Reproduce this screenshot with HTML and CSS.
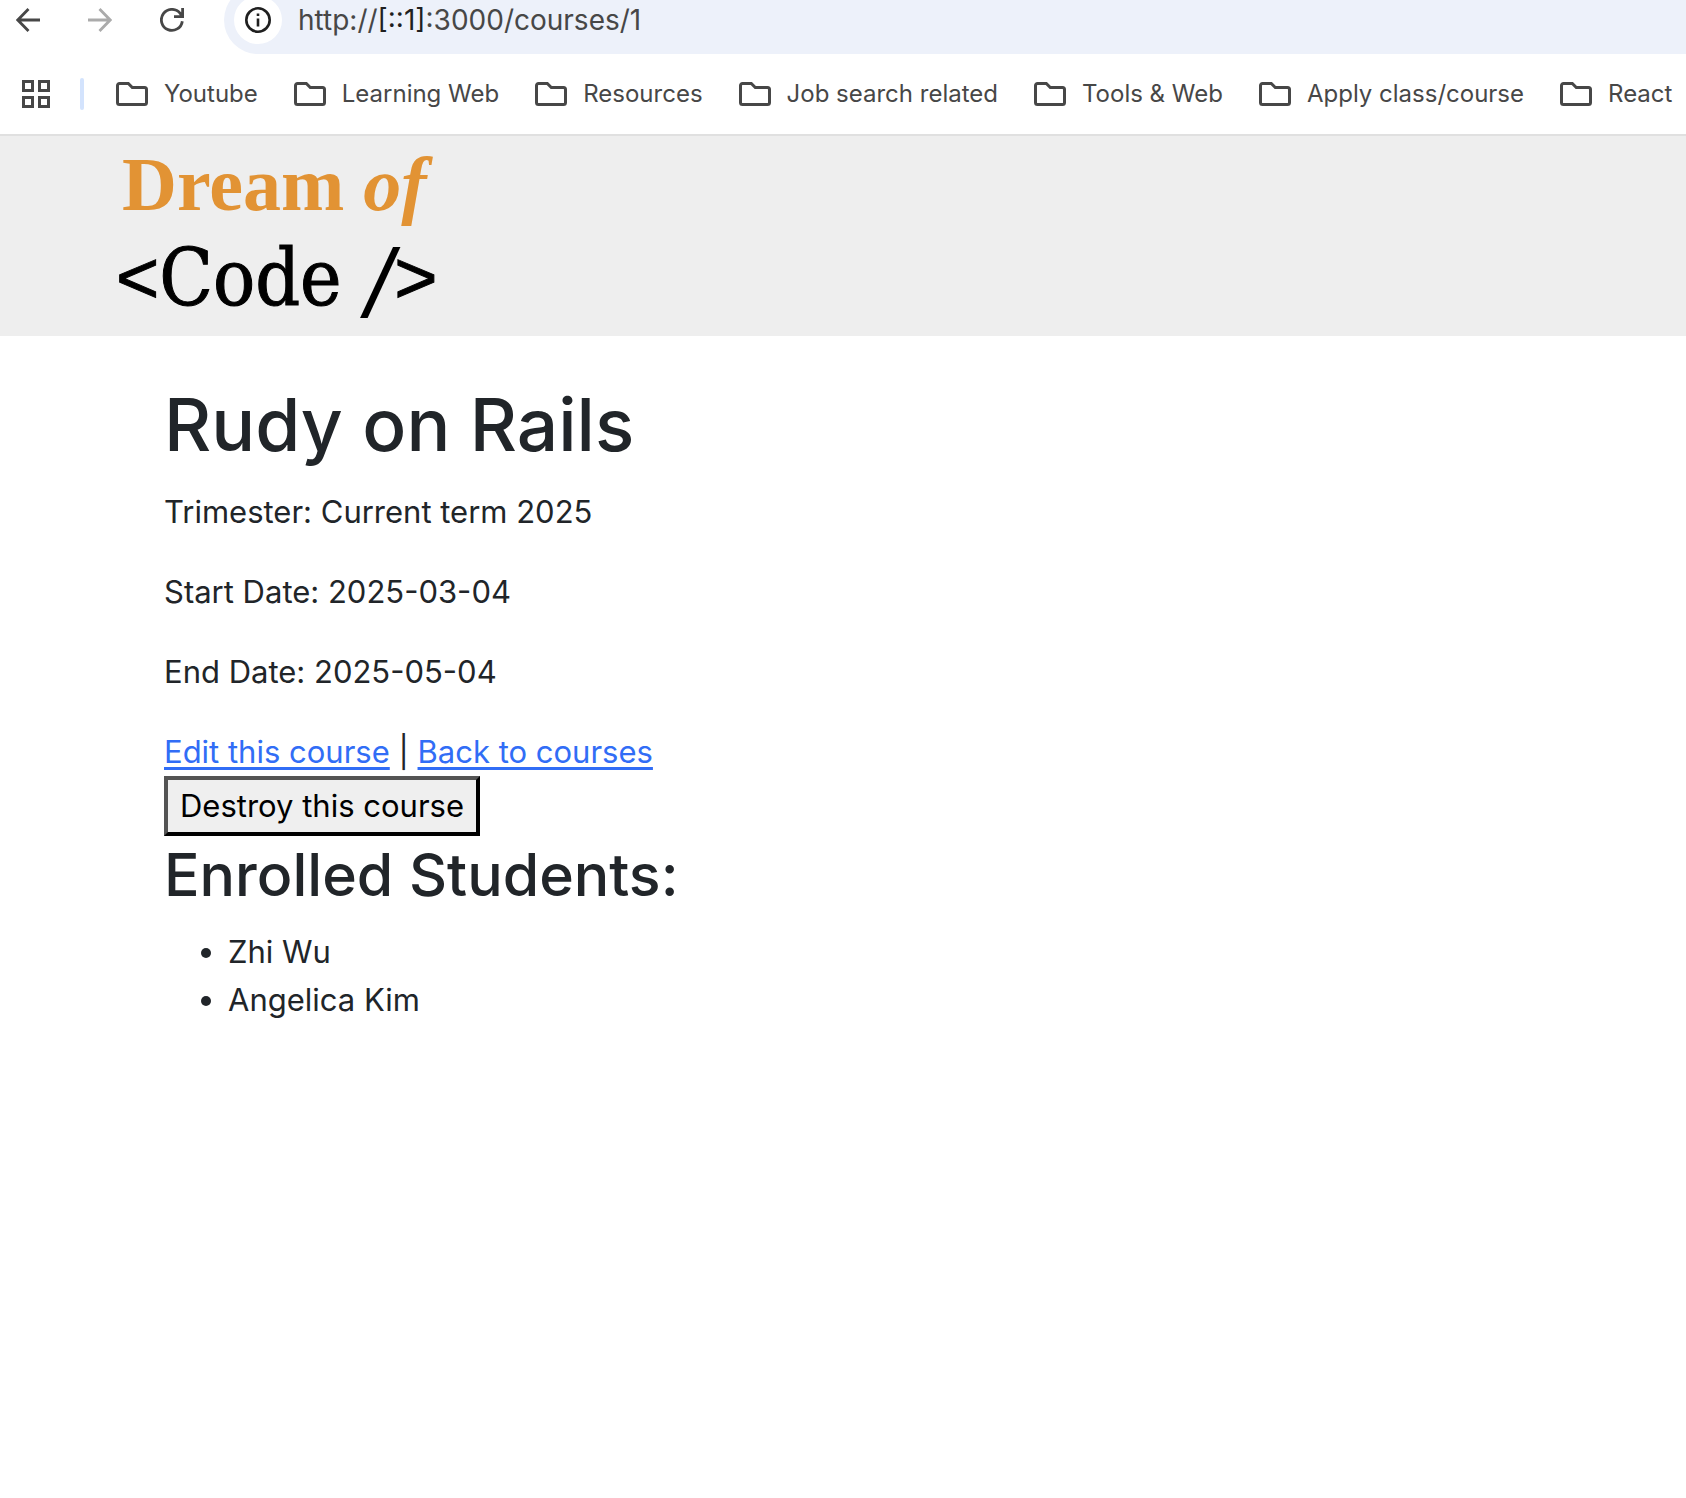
FILE: index.html
```html
<!DOCTYPE html>
<html lang="en">
<head>
<meta charset="utf-8">
<meta name="viewport" content="width=device-width, initial-scale=1">
<title>Dream of Code</title>
<link rel="stylesheet" href="styles.css">
</head>
<body>
<svg class="sprite" aria-hidden="true">
  <symbol id="folder" viewBox="0 0 32 24"><path d="M3.500 1.500h8.800l4 4H28.500a2 2 0 0 1 2 2v13a2 2 0 0 1-2 2h-25a2 2 0 0 1-2-2v-17a2 2 0 0 1 2-2z" fill="none" stroke="currentColor" stroke-width="3"/></symbol>
</svg>

<div class="toolbar">
  <div class="nav">
    <button type="button" class="icon-button" aria-label="Back">
      <svg width="24" height="24" viewBox="0 0 24 24" fill="none" stroke="currentColor" stroke-width="2.800"><path d="M12.500 1 1.800 12l10.700 11M2 12h22"/></svg>
    </button>
    <button type="button" class="icon-button" aria-label="Forward" disabled>
      <svg width="24" height="24" viewBox="0 0 24 24" fill="none" stroke="currentColor" stroke-width="2.800"><path d="M11.500 1l10.700 11-10.700 11M22 12H0"/></svg>
    </button>
    <button type="button" class="icon-button" aria-label="Reload">
      <svg width="24" height="24" viewBox="0 0 24 24" fill="none" stroke="currentColor" stroke-width="2.800"><path d="M22.300 13.200A10.500 10.500 0 1 1 20 5.200l2 2.800M22.600 0v8.600H14"/></svg>
    </button>
  </div>
  <div class="address">
    <button type="button" class="site-info" aria-label="View site information">
      <svg width="26" height="26" viewBox="0 0 26 26" fill="none" stroke="currentColor" stroke-width="2.600"><circle cx="13" cy="13" r="11.700"/><path d="M13 11.500v8M13 6.500v2.600"/></svg>
    </button>
    <div class="url" role="textbox" aria-label="Address">http://<span class="host">[::1]</span>:3000/courses/1</div>
  </div>
</div>

<nav class="bookmarks" aria-label="Bookmarks">
  <button type="button" class="icon-button" aria-label="Apps">
    <svg width="28" height="28" viewBox="0 0 28 28" fill="none" stroke="currentColor" stroke-width="3"><path d="M1.500 1.500h9v9h-9zM17.500 1.500h9v9h-9zM1.500 17.500h9v9h-9zM17.500 17.500h9v9h-9z"/></svg>
  </button>
  <span class="divider"></span>
  <div class="folders">
    <button type="button" class="folder"><svg width="32" height="24"><use href="#folder"/></svg>Youtube</button>
    <button type="button" class="folder"><svg width="32" height="24"><use href="#folder"/></svg>Learning Web</button>
    <button type="button" class="folder"><svg width="32" height="24"><use href="#folder"/></svg>Resources</button>
    <button type="button" class="folder"><svg width="32" height="24"><use href="#folder"/></svg>Job search related</button>
    <button type="button" class="folder"><svg width="32" height="24"><use href="#folder"/></svg>Tools &amp; Web</button>
    <button type="button" class="folder"><svg width="32" height="24"><use href="#folder"/></svg>Apply class/course</button>
    <button type="button" class="folder"><svg width="32" height="24"><use href="#folder"/></svg>React</button>
  </div>
</nav>

<header class="site-header">
  <div class="logo">
    <div class="logo-top">Dream <em>of</em></div>
    <div class="logo-code"><span class="bracket">&lt;</span><span>Code</span><span class="slash">/</span><span class="bracket">&gt;</span></div>
  </div>
</header>

<main class="content">
  <h1>Rudy on Rails</h1>
  <p>Trimester: Current term 2025</p>
  <p>Start Date: 2025-03-04</p>
  <p>End Date: 2025-05-04</p>
  <div class="actions"><a href="#edit">Edit this course</a> | <a href="#courses">Back to courses</a></div>
  <form><button type="button" class="destroy">Destroy this course</button></form>
  <h2>Enrolled Students:</h2>
  <ul>
    <li>Zhi Wu</li>
    <li>Angelica Kim</li>
  </ul>
</main>
</body>
</html>
```
FILE: styles.css
```css
* {
  box-sizing: border-box;
}

body {
  margin: 0;
  background: #fff;
  color: #212529;
  font-family: Inter, "Liberation Sans", sans-serif;
  font-size: 31px;
  line-height: 48px;
  overflow-x: hidden;
}

button {
  font: inherit;
}

.sprite {
  display: none;
}

/* Browser toolbar */
.toolbar {
  display: flex;
  align-items: flex-end;
  height: 54px;
  overflow: hidden;
  color: #474747;
}

.nav {
  display: flex;
  align-items: center;
  gap: 48px;
  height: 68px;
  padding: 0 40px 0 16px;
}

.icon-button {
  display: flex;
  padding: 0;
  border: 0;
  background: none;
  color: #474747;
}

.icon-button:disabled {
  color: #ababab;
}

.address {
  display: flex;
  flex: 1;
  align-items: center;
  gap: 16px;
  height: 68px;
  padding-left: 10px;
  border-radius: 34px 0 0 34px;
  background: #edf1fa;
}

.site-info {
  display: flex;
  align-items: center;
  justify-content: center;
  width: 48px;
  height: 48px;
  padding: 0;
  border: 0;
  border-radius: 50%;
  background: #fff;
  color: #1f1f1f;
}

.url {
  font-size: 28px;
  line-height: 32px;
}

.host {
  color: #1f1f1f;
}

/* Bookmarks bar */
.bookmarks {
  display: flex;
  align-items: center;
  height: 82px;
  padding-left: 22px;
  border-bottom: 2px solid #e0e0e0;
  overflow: hidden;
}

.divider {
  flex: none;
  width: 4px;
  height: 32px;
  margin: 0 32px 0 30px;
  border-radius: 2px;
  background: #d3e3fd;
}

.folders {
  display: flex;
  gap: 36px;
}

.folder {
  display: flex;
  align-items: center;
  gap: 16px;
  padding: 0;
  border: 0;
  background: none;
  color: #474747;
  font-size: 24px;
  line-height: 32px;
  white-space: nowrap;
}

/* Site header */
.site-header {
  height: 200px;
  padding: 12px 116px;
  background: #eee;
}

.logo-top {
  padding-left: 6px;
  color: #e29334;
  font-family: "Liberation Serif", serif;
  font-size: 76px;
  font-weight: 700;
  line-height: 72px;
}

.logo-code {
  display: flex;
  color: #000;
  font-family: "DejaVu Serif Condensed", "DejaVu Serif", serif;
  font-size: 78px;
  font-stretch: condensed;
  line-height: 116px;
  -webkit-text-stroke: 1px #000;
}

.bracket {
  font-family: "Liberation Sans", sans-serif;
  font-size: 74px;
}

.slash {
  padding: 0 2px 0 24px;
  font-family: "Liberation Sans", sans-serif;
  font-size: 96px;
  font-style: italic;
  line-height: 128px;
  -webkit-text-stroke: 0;
}

/* Course page */
.content {
  padding: 40px 164px;
}

h1,
h2 {
  margin: 0 0 14px;
  font-weight: 500;
}

h1 {
  font-size: 73px;
  line-height: 98px;
}

h2 {
  font-size: 59px;
  line-height: 78px;
}

p {
  margin: 0 0 32px;
}

a {
  color: #316df6;
  text-decoration-thickness: 3px;
  text-underline-offset: 4px;
}

form {
  display: flex;
}

.destroy {
  padding: 2px 12px;
  border: 4px outset #000;
  background: #efefef;
  color: #000;
}

ul {
  margin: 0;
  padding-left: 64px;
}
```
